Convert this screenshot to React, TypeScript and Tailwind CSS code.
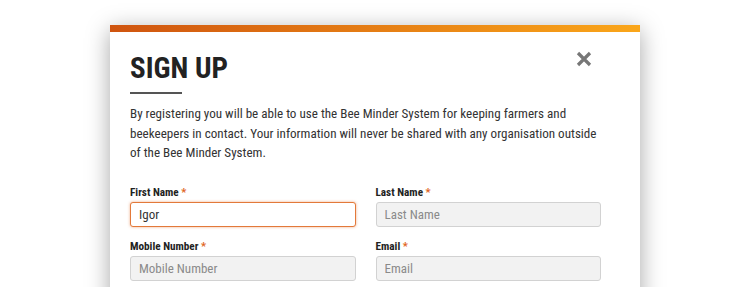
import React from "react";

const font = {
  fontFamily: '"Roboto Condensed", "Liberation Sans Narrow", "DejaVu Sans Condensed", Roboto, sans-serif',
};

const Field: React.FC<{ label: string; placeholder: string; value?: string; focused?: boolean }> = ({
  label,
  placeholder,
  value,
  focused,
}) => {
  return (
    <div className="flex flex-col">
      <label className="pt-[2px] text-[11.2px] leading-[16px] font-bold text-[#222] mb-[1px]">
        {label} <span className="text-[#e0641c]">*</span>
      </label>
      <input
        className={`h-[25px] w-full rounded-[3px] border px-[8px] text-[13px] text-[#333] placeholder:text-[#8a8a8a] outline-none ${
          focused
            ? "bg-white border-[#e3793a] shadow-[0_0_3px_rgba(227,121,58,0.6)]"
            : "bg-[#f2f2f2] border-[#d2d2d2]"
        }`}
        style={font}
        placeholder={placeholder}
        defaultValue={value}
      />
    </div>
  );
};

export default function App() {
  return (
    <div className="w-[750px] h-[287px] bg-white overflow-hidden" style={font}>
      <div className="ml-[110px] mt-[25px] w-[530px] h-[300px] bg-white shadow-[0_5px_22px_rgba(0,0,0,0.35)]">
        <div className="h-[7px] bg-gradient-to-r from-[#cf540f] to-[#faa61a]" />
        <div className="relative px-[20px] pt-[21px]">
          <button className="absolute right-[48px] top-[19px] w-[16px] h-[16px] text-[#777]">
            <svg viewBox="0 0 16 16" width="16" height="16">
              <path d="M2 2 L14 14 M14 2 L2 14" stroke="currentColor" strokeWidth="3.2" strokeLinecap="butt" />
            </svg>
          </button>
          <h1 className="text-[29px] leading-[30px] font-bold text-[#222]">SIGN UP</h1>
          <div className="mt-[9px] w-[52px] h-[2px] bg-[#555]" />
          <p className="mt-[10px] w-[474px] text-[13.1px] leading-[19.5px] text-[#333]">
            By registering you will be able to use the Bee Minder System for keeping farmers and beekeepers in
            contact. Your information will never be shared with any organisation outside of the Bee Minder System.
          </p>
          <div className="mt-[20.5px] w-[471px] grid grid-cols-2 gap-x-[20px] gap-y-[10px]">
            <Field label="First Name" placeholder="First Name" value="Igor" focused />
            <Field label="Last Name" placeholder="Last Name" />
            <Field label="Mobile Number" placeholder="Mobile Number" />
            <Field label="Email" placeholder="Email" />
          </div>
        </div>
      </div>
    </div>
  );
}
